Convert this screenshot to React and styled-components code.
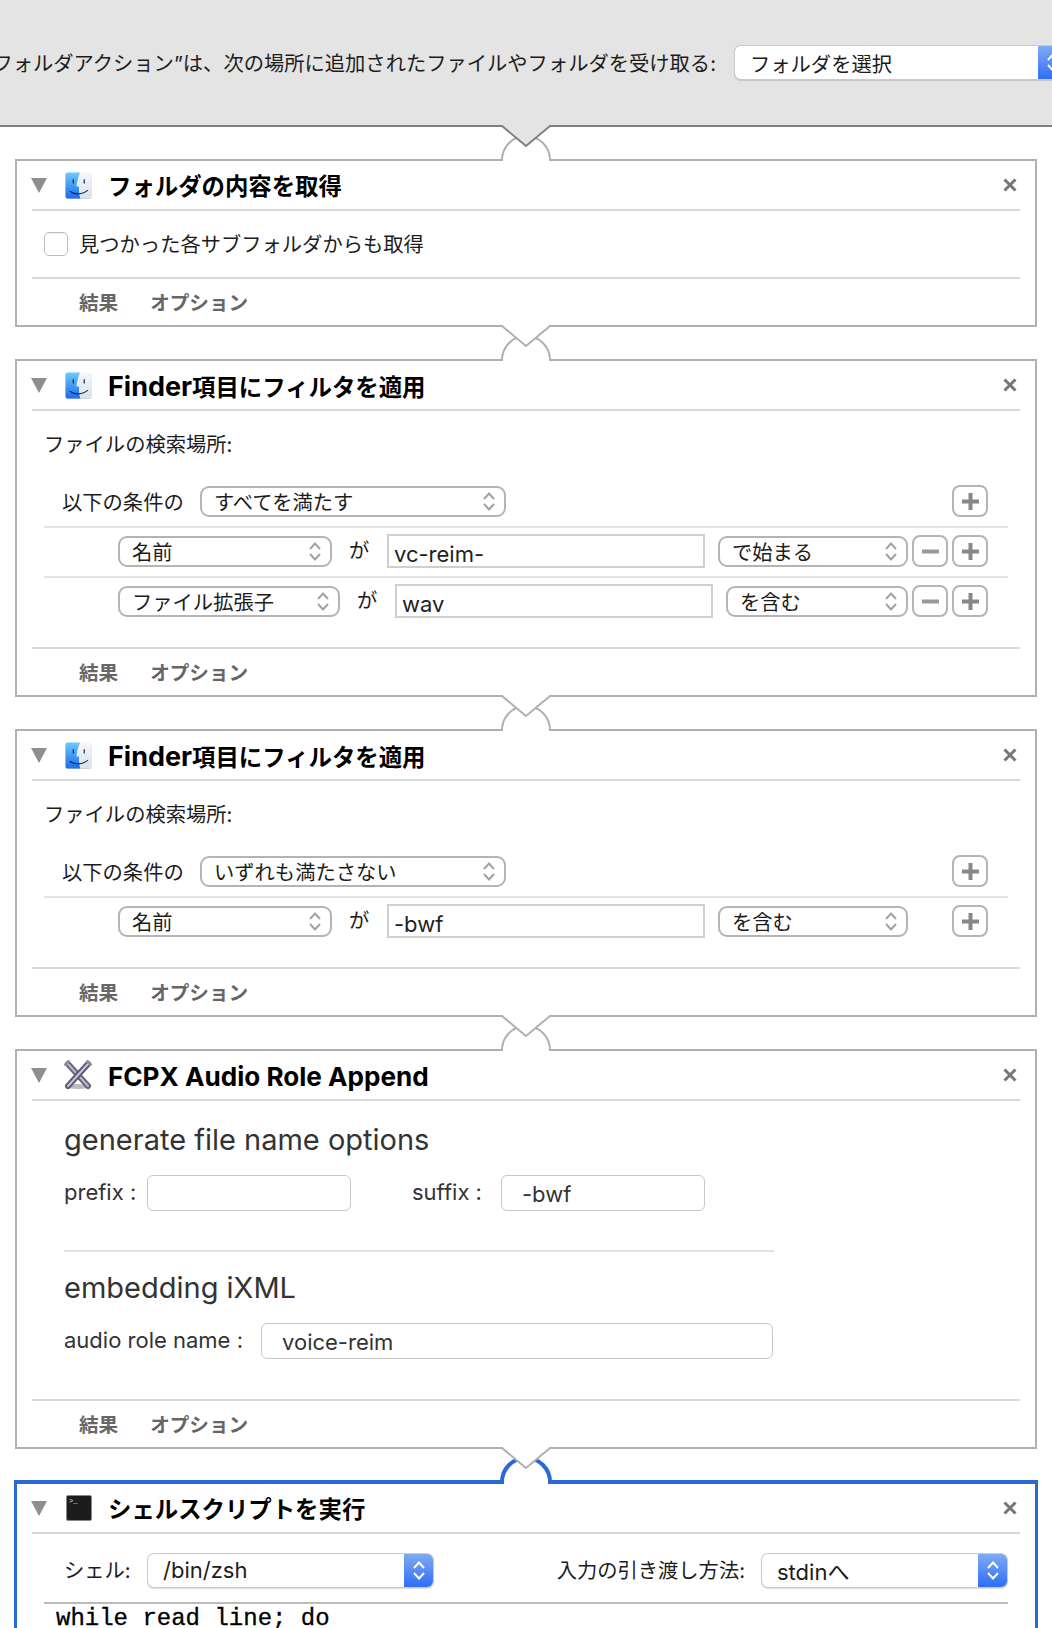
import React from 'react'
import styled, { createGlobalStyle } from 'styled-components'

const SANS = 'Inter, "Noto Sans CJK JP", sans-serif'

const GlobalStyle = createGlobalStyle`
  html, body { margin: 0; padding: 0; background: #fff; }
  body { font-family: ${SANS}; color: #1c1c1c; }
  * { box-sizing: border-box; }
`

const Page = styled.div`
  width: 1052px;
  height: 1628px;
  overflow: hidden;
  background: #fff;
`

const TopPanel = styled.div`
  height: 127px;
  background: #e4e4e4;
  border-bottom: 2px solid #808080;
  display: flex;
  justify-content: flex-end;
  padding-top: 46px;
  overflow: hidden;
`
const TopLabel = styled.span`
  flex-shrink: 0;
  font-size: 20.3px;
  line-height: 36px;
  white-space: nowrap;
  margin-right: 19px;
`

const Card = styled.section`
  position: relative;
  margin: ${p => (p.$active ? '31px 14px 0' : '32px 15px 0')};
  border: ${p => (p.$active ? '3px solid #2a69d6' : '2px solid #b0b0b0')};
  border-top-width: ${p => (p.$active ? '4px' : '2px')};
  background: #fff;
`
const ConnectorSvg = styled.svg`
  position: absolute;
  left: 50%;
  margin-left: -26px;
  top: ${p => p.$top}px;
`

const Header = styled.header`
  height: 48px;
  display: flex;
  align-items: center;
  padding: 0 18px 0 14px;
`
const Triangle = styled.span`
  width: 0;
  height: 0;
  border-left: 8.5px solid transparent;
  border-right: 8.5px solid transparent;
  border-top: 15px solid #8f8f8f;
  margin-right: 18px;
`
const IconBox = styled.span`
  width: 27px;
  height: 27px;
  display: flex;
  align-items: center;
  justify-content: center;
  margin-right: 16px;
`
const Title = styled.h2`
  margin: 4px 0 0;
  font-size: 23.4px;
  line-height: 30px;
  font-weight: 700;
  color: #000;
  white-space: nowrap;
`
const TitleLatin = styled.span`
  font-size: ${p => p.$size}px;
`
const CloseBtn = styled.svg`
  margin-left: auto;
`
const Rule = styled.div`
  height: 2px;
  margin: 0 15px 0 15px;
  background: #d8d8d8;
`
const Footer = styled.footer`
  height: 46px;
  display: flex;
  align-items: center;
  gap: 32px;
  padding: 0 0 2px 62px;
  font-size: 19.6px;
  font-weight: 700;
  color: #666;
`

const Body = styled.div`
  margin: 0 27px;
`
const CheckBody = styled(Body)`
  height: 66px;
  display: flex;
  align-items: center;
  gap: 11px;
  padding-bottom: 1px;
  font-size: 20.3px;
`
const CheckText = styled.span`
  margin-top: -2px;
`
const Checkbox = styled.span`
  width: 24px;
  height: 24px;
  border: 1px solid #bdbdbd;
  border-radius: 5px;
  background: #fff;
  box-shadow: inset 0 1px 1px rgba(0, 0, 0, 0.06);
`
const SearchLabel = styled.div`
  padding-top: 19px;
  margin-bottom: 18px;
  font-size: 20.3px;
  line-height: 30px;
`
const Row = styled.div`
  height: ${p => (p.$last ? '48px' : '50px')};
  display: flex;
  align-items: center;
  padding: 0 20px 2px ${p => p.$indent}px;
  border-bottom: ${p => (p.$last ? 'none' : '2px solid #e2e2e2')};
  font-size: 20.3px;
`
const ConditionLabel = styled.span`
  width: 138px;
  flex-shrink: 0;
`
const Ga = styled.span`
  width: 20px;
  flex-shrink: 0;
  margin: 0 18px 0 17px;
  line-height: 28px;
`
const Select = styled.div`
  width: ${p => p.$w}px;
  height: 31px;
  margin-left: ${p => p.$ml || 0}px;
  flex-shrink: 0;
  display: flex;
  align-items: center;
  justify-content: space-between;
  padding: 0 8px 0 12px;
  border: 2px solid #b4b4b4;
  border-radius: 9px;
  background: #fff;
  font-size: 20.3px;
  white-space: nowrap;
`
const TextField = styled.div`
  width: ${p => p.$w}px;
  height: 34px;
  flex-shrink: 0;
  padding: 3px 0 0 5px;
  border: 2px solid #cfcfcf;
  font-size: 22px;
  line-height: 30px;
  color: #222;
`
const Buttons = styled.div`
  margin-left: auto;
  display: flex;
  gap: 4px;
`
const SquareBtn = styled.span`
  width: 36px;
  height: 32px;
  display: flex;
  align-items: center;
  justify-content: center;
  border: 2px solid #b4b4b4;
  border-radius: 8px;
  background: #fff;
`

const FormBody = styled(Body)`
  height: 298px;
  padding: 19px 0 0 20px;
`
const Heading = styled.h3`
  margin: ${p => p.$mt || 0}px 0 0;
  font-size: 29px;
  line-height: 40px;
  font-weight: 400;
  color: #333;
`
const FieldRow = styled.div`
  display: flex;
  align-items: center;
  margin-top: 15px;
`
const FieldLabel = styled.span`
  width: ${p => p.$w}px;
  margin-left: ${p => p.$ml || 0}px;
  margin-top: -3px;
  flex-shrink: 0;
  font-size: 22px;
  color: #333;
  white-space: nowrap;
`
const RoundField = styled.div`
  width: ${p => p.$w}px;
  height: 36px;
  flex-shrink: 0;
  padding-left: 20px;
  border: 1.5px solid #c8c8c8;
  border-radius: 6px;
  font-size: 22px;
  line-height: 36px;
  color: #333;
`
const FormRule = styled.div`
  height: 2px;
  width: 710px;
  margin-top: 39px;
  background: #e2e2e2;
`

const ShellRow = styled.div`
  display: flex;
  align-items: center;
  justify-content: space-between;
  padding: 20px 1px 15px 20px;
  font-size: 20.3px;
`
const ShellGroup = styled.div`
  display: flex;
  align-items: center;
  gap: ${p => p.$gap || 0}px;
`
const ShellLabel = styled.span`
  width: ${p => p.$w}px;
  margin-top: -3px;
  white-space: nowrap;
`
const BlueSelect = styled.div`
  width: ${p => p.$w}px;
  height: 33px;
  margin-right: ${p => p.$mr || 0}px;
  flex-shrink: 0;
  display: flex;
  align-items: center;
  justify-content: space-between;
  padding-left: 15px;
  border-radius: 6px;
  background: #fff;
  box-shadow: 0 0 0 1px #cbcbcb, 0 1px 1px 1px rgba(0, 0, 0, 0.14);
  font-size: ${p => p.$size}px;
  white-space: nowrap;
  overflow: hidden;
`
const PopupText = styled.span`
  margin-top: ${p => (p.$up ? '-2px' : '0')};
`
const Stepper = styled.span`
  width: 29px;
  align-self: stretch;
  display: flex;
  align-items: center;
  justify-content: center;
  background: linear-gradient(#7eabf3, #2f6ef6);
`
const CodeBlock = styled.pre`
  margin: 0;
  padding: 1px 0 0 12px;
  border-top: 2px solid #bbbbbb;
  font-family: "Liberation Mono", monospace;
  font-size: 24px;
  line-height: 28px;
  color: #000;
  -webkit-text-stroke: 0.3px #000;
`
const BottomGap = styled.div`
  height: 21px;
`

// V notch of the block above plus the round socket of this block
const Connector = ({ above = '#fff', line = '#b0b0b0', own = '#b0b0b0', y0 = 3, y1 = 37, sw = 2, top = -38 }) => (
  <ConnectorSvg $top={top} width="52" height="42" viewBox="0 0 52 42" aria-hidden="true">
    <path d={`M2 ${y1} A24 24 0 0 1 50 ${y1}`} fill="#fff" stroke={own} strokeWidth={sw} />
    <rect x={2 + sw / 2} y={y1 - 3} width={48 - sw} height="6" fill="#fff" />
    <rect x="3" y={y0 - 2} width="46" height="3" fill={above} />
    <polygon points={`2,${y0} 26,${y0 + 20} 50,${y0}`} fill={above} />
    <polyline points={`2,${y0} 26,${y0 + 20} 50,${y0}`} fill="none" stroke={line} strokeWidth="2" />
  </ConnectorSvg>
)

const FinderIcon = () => (
  <svg width="27" height="27" viewBox="0 0 26 26" aria-hidden="true">
    <defs>
      <linearGradient id="finderL" x1="0" y1="0" x2="0" y2="1">
        <stop offset="0" stopColor="#6ccaf8" />
        <stop offset="1" stopColor="#1b6bef" />
      </linearGradient>
      <linearGradient id="finderR" x1="0" y1="0" x2="0" y2="1">
        <stop offset="0" stopColor="#f6f7f9" />
        <stop offset="1" stopColor="#d9e1ea" />
      </linearGradient>
    </defs>
    <rect x="0.5" y="1" width="25" height="25" rx="2" fill="#c9c9c9" />
    <rect x="0.5" y="0.5" width="25" height="25" rx="2" fill="url(#finderR)" />
    <path d="M2.5 0.5H14.5C13 4 11.5 9 11 14H13.5C13.3 18 13.8 22 14.6 25.5H2.5a2 2 0 0 1-2-2V2.5a2 2 0 0 1 2-2Z" fill="url(#finderL)" />
    <path d="M8 7v4M18.5 7v4" stroke="#12335f" strokeWidth="1.2" />
    <path d="M4.5 18.5C9 22 17 22 22 17.5" fill="none" stroke="#12335f" strokeWidth="1.1" />
  </svg>
)

const ToolsIcon = () => (
  <svg width="30" height="30" viewBox="0 0 30 30" aria-hidden="true" style={{ flexShrink: 0, marginLeft: -2 }}>
    <ellipse cx="15" cy="26.5" rx="13" ry="2.4" fill="#bdbdbd" />
    <path d="M5 4L25 26" stroke="#64647a" strokeWidth="6" strokeLinecap="round" />
    <path d="M5 4L25 26" stroke="#b9b9cc" strokeWidth="2" strokeLinecap="round" />
    <path d="M25 4L5 26" stroke="#5a5a72" strokeWidth="6" strokeLinecap="round" />
    <path d="M25 4L5 26" stroke="#c4c4d4" strokeWidth="2" strokeLinecap="round" />
    <path d="M2.5 4.5L5.5 1.5M24.5 1.5L27.5 4.5" stroke="#8e8ea2" strokeWidth="3" strokeLinecap="round" />
  </svg>
)

const TerminalIcon = () => (
  <svg width="26" height="26" viewBox="0 0 26 26" aria-hidden="true">
    <rect x="0.5" y="0.5" width="25" height="25" rx="1.5" fill="#1c1c1c" stroke="#8a8a8a" />
    <text x="3" y="8" fontSize="7" fill="#e6e6e6" fontFamily="Liberation Mono, monospace">&gt;_</text>
  </svg>
)

const CloseIcon = () => (
  <CloseBtn width="14" height="14" viewBox="0 0 14 14" aria-hidden="true">
    <path d="M1.5 1.5L12.5 12.5M12.5 1.5L1.5 12.5" stroke="#767676" strokeWidth="3" />
  </CloseBtn>
)

const Chevrons = ({ color = '#a2a2a2', w = 2 }) => (
  <svg width="14" height="21" viewBox="0 0 14 21" aria-hidden="true" style={{ flexShrink: 0 }}>
    <path d="M2 8L7 2.5L12 8M2 13L7 18.5L12 13" fill="none" stroke={color} strokeWidth={w} />
  </svg>
)

const PlusIcon = () => (
  <svg width="17" height="17" viewBox="0 0 17 17" aria-hidden="true">
    <path d="M0 8.5H17M8.5 0V17" stroke="#888" strokeWidth="4" />
  </svg>
)
const MinusIcon = () => (
  <svg width="17" height="17" viewBox="0 0 17 17" aria-hidden="true">
    <path d="M0 8.5H17" stroke="#999" strokeWidth="4" />
  </svg>
)

const OutlineSelect = ({ w, ml, children }) => (
  <Select $w={w} $ml={ml}>
    <span>{children}</span>
    <Chevrons />
  </Select>
)

const Popup = ({ w, mr, size = 22, up, children }) => (
  <BlueSelect $w={w} $mr={mr} $size={size}>
    <PopupText $up={up}>{children}</PopupText>
    <Stepper><Chevrons color="#fff" /></Stepper>
  </BlueSelect>
)

const CardHead = ({ icon, title }) => (
  <>
    <Header>
      <Triangle />
      <IconBox>{icon}</IconBox>
      <Title>{title}</Title>
      <CloseIcon />
    </Header>
    <Rule />
  </>
)

const CardFoot = () => (
  <>
    <Rule />
    <Footer>
      <span>結果</span>
      <span>オプション</span>
    </Footer>
  </>
)

const Criteria = ({ mode, rows }) => (
  <Body>
    <SearchLabel>ファイルの検索場所:</SearchLabel>
    <Row $indent={18}>
      <ConditionLabel>以下の条件の</ConditionLabel>
      <OutlineSelect w={306}>{mode}</OutlineSelect>
      <Buttons><SquareBtn><PlusIcon /></SquareBtn></Buttons>
    </Row>
    {rows.map((r, i) => (
      <Row key={r.value} $indent={74} $last={i === rows.length - 1}>
        <OutlineSelect w={r.keyW}>{r.key}</OutlineSelect>
        <Ga>が</Ga>
        <TextField $w={318}>{r.value}</TextField>
        <OutlineSelect w={r.opW} ml={13}>{r.op}</OutlineSelect>
        <Buttons>
          {r.removable && <SquareBtn><MinusIcon /></SquareBtn>}
          <SquareBtn><PlusIcon /></SquareBtn>
        </Buttons>
      </Row>
    ))}
    <BottomGap />
  </Body>
)

const FinderFilterTitle = (
  <>
    <TitleLatin $size={27}>Finder</TitleLatin>項目にフィルタを適用
  </>
)

const App = () => (
  <Page>
    <GlobalStyle />
    <TopPanel>
      <TopLabel>“フォルダアクション”は、次の場所に追加されたファイルやフォルダを受け取る:</TopLabel>
      <Popup w={332} mr={-15} size={20.3}>フォルダを選択</Popup>
    </TopPanel>

    <Card>
      <Connector above="#e4e4e4" line="#808080" />
      <CardHead icon={<FinderIcon />} title="フォルダの内容を取得" />
      <CheckBody>
        <Checkbox />
        <CheckText>見つかった各サブフォルダからも取得</CheckText>
      </CheckBody>
      <CardFoot />
    </Card>

    <Card>
      <Connector />
      <CardHead icon={<FinderIcon />} title={FinderFilterTitle} />
      <Criteria
        mode="すべてを満たす"
        rows={[
          { key: '名前', keyW: 214, value: 'vc-reim-', op: 'で始まる', opW: 190, removable: true },
          { key: 'ファイル拡張子', keyW: 222, value: 'wav', op: 'を含む', opW: 182, removable: true },
        ]}
      />
      <CardFoot />
    </Card>

    <Card>
      <Connector />
      <CardHead icon={<FinderIcon />} title={FinderFilterTitle} />
      <Criteria
        mode="いずれも満たさない"
        rows={[{ key: '名前', keyW: 214, value: '-bwf', op: 'を含む', opW: 190 }]}
      />
      <CardFoot />
    </Card>

    <Card>
      <Connector />
      <CardHead icon={<ToolsIcon />} title={<TitleLatin $size={26.1}>FCPX Audio Role Append</TitleLatin>} />
      <FormBody>
        <Heading>generate file name options</Heading>
        <FieldRow>
          <FieldLabel $w={83}>prefix :</FieldLabel>
          <RoundField $w={204} />
          <FieldLabel $w={89} $ml={61}>suffix :</FieldLabel>
          <RoundField $w={204}>-bwf</RoundField>
        </FieldRow>
        <FormRule />
        <Heading $mt={16}>embedding iXML</Heading>
        <FieldRow>
          <FieldLabel $w={197}>audio role name :</FieldLabel>
          <RoundField $w={512}>voice-reim</RoundField>
        </FieldRow>
      </FormBody>
      <CardFoot />
    </Card>

    <Card $active>
      <Connector own="#2a69d6" y0={4} y1={38} sw={4} top={-40} />
      <CardHead icon={<TerminalIcon />} title="シェルスクリプトを実行" />
      <Body>
        <ShellRow>
          <ShellGroup>
            <ShellLabel $w={84}>シェル:</ShellLabel>
            <Popup w={285} up>/bin/zsh</Popup>
          </ShellGroup>
          <ShellGroup $gap={17}>
            <ShellLabel>入力の引き渡し方法:</ShellLabel>
            <Popup w={245} up>stdinへ</Popup>
          </ShellGroup>
        </ShellRow>
        <CodeBlock>while read line; do</CodeBlock>
      </Body>
    </Card>
  </Page>
)

export default App
